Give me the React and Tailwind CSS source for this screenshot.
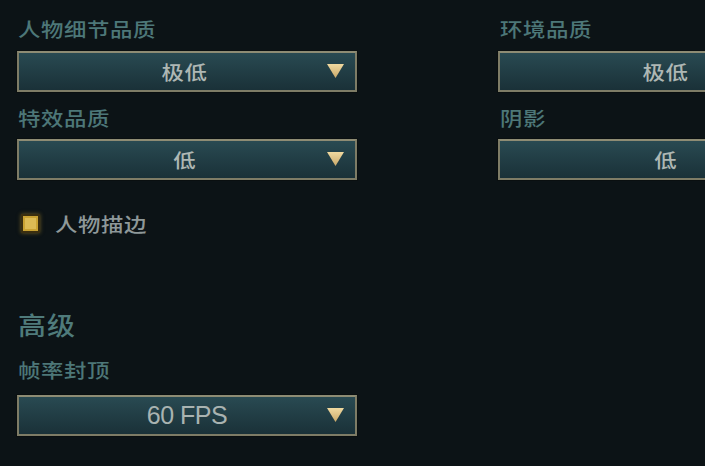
import React from "react";

const font = { fontFamily: '"Noto Sans CJK SC", "Liberation Sans", sans-serif' };

function Arrow() {
  return (
    <svg width="17" height="14" viewBox="0 0 17 14" className="shrink-0">
      <defs>
        <linearGradient id="ag" x1="0" y1="0" x2="0" y2="1">
          <stop offset="0" stopColor="#f0d9a0" />
          <stop offset="1" stopColor="#c9a86a" />
        </linearGradient>
      </defs>
      <polygon points="0,0 17,0 8.5,14" fill="url(#ag)" />
    </svg>
  );
}

function Dropdown({ value, arrow = true, latin = false }) {
  return (
    <div className="relative w-[342px] h-[43px] shrink-0 border border-[#0a0f10] bg-[#0a0f10]">
      <div className="h-full w-full border-2 border-[#7e7c66] border-t-[#8e8c74] bg-gradient-to-b from-[#294a52] to-[#1a3138] flex items-center justify-center">
        {latin ? (
          <span
            className="text-[25px] leading-none text-[#a9b3b1] tracking-[-0.5px]"
            style={{ fontFamily: '"Liberation Sans", sans-serif' }}
          >
            {value}
          </span>
        ) : (
          <span className="inline-block text-[19px] leading-none font-medium text-[#aeb7b4] tracking-[0.5px] scale-x-[1.18] ml-[-4px]">
            {value}
          </span>
        )}
        {arrow && (
          <div className="absolute right-[13px] top-[13px]">
            <Arrow />
          </div>
        )}
      </div>
    </div>
  );
}

function Label({ children, className = "" }) {
  return (
    <div className={"h-[24px] leading-[24px] pl-[2px] " + className}>
      <span className="inline-block origin-left scale-x-[1.18] text-[19px] font-medium tracking-[0.5px] text-[#4d7778]">
        {children}
      </span>
    </div>
  );
}

export default function App() {
  return (
    <div className="w-[705px] h-[466px] overflow-hidden bg-[#0c1316]" style={font}>
      <div className="flex gap-[139px] pl-[16px] pt-[17px]">
        <div className="flex flex-col w-[342px] shrink-0">
          <Label>人物细节品质</Label>
          <div className="mt-[9px]">
            <Dropdown value="极低" />
          </div>
          <Label className="mt-[13px]">特效品质</Label>
          <div className="mt-[8px]">
            <Dropdown value="低" />
          </div>
          <div className="mt-[31px] flex items-center gap-[15px] pl-[5px] h-[22px]">
            <div className="w-[19px] h-[19px] border-2 border-[#3a2e10] bg-[#c9a233] flex items-center justify-center shadow-[0_0_4px_rgba(200,160,50,0.5)]">
              <div className="w-[11px] h-[11px] bg-[#dcbb55]" />
            </div>
            <span className="inline-block origin-left scale-x-[1.18] text-[19px] leading-none font-medium tracking-[0.5px] text-[#8e9899]">
              人物描边
            </span>
          </div>
          <div className="mt-[75px] h-[30px] leading-[30px] pl-[2px]">
            <span className="inline-block origin-left scale-x-[1.12] text-[25px] font-medium tracking-[1px] text-[#4f7b7b]">
              高级
            </span>
          </div>
          <Label className="mt-[19px]">帧率封顶</Label>
          <div className="mt-[12px]">
            <Dropdown value="60 FPS" latin />
          </div>
        </div>
        <div className="flex flex-col w-[342px] shrink-0">
          <Label className="pl-[3px]">环境品质</Label>
          <div className="mt-[9px]">
            <Dropdown value="极低" />
          </div>
          <Label className="mt-[13px] pl-[3px]">阴影</Label>
          <div className="mt-[8px]">
            <Dropdown value="低" />
          </div>
        </div>
      </div>
    </div>
  );
}
